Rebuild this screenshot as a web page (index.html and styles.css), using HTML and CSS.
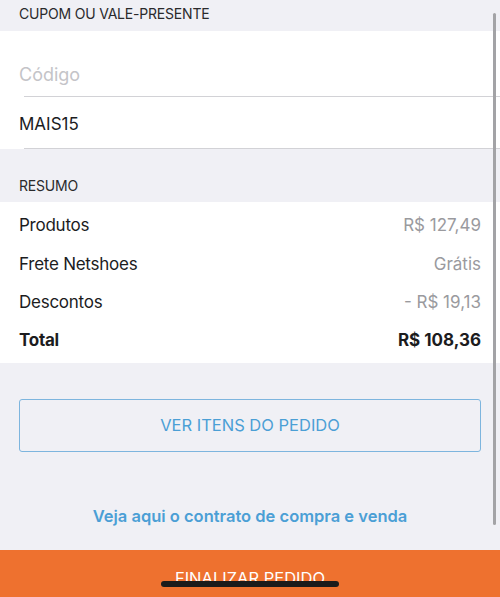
FILE: index.html
```html
<!DOCTYPE html>
<html lang="pt-BR">
<head>
    <meta charset="UTF-8">
    <meta name="viewport" content="width=device-width, initial-scale=1.0">
    <title>Carrinho - Resumo</title>
    <link rel="stylesheet" href="styles.css">
</head>
<body>
    <div class="screen">
        <div class="section-title first">Cupom ou vale-presente</div>
        <div class="group">
            <div class="field field-code">
                <input type="text" placeholder="Código">
            </div>
            <div class="sep"></div>
            <div class="field field-value">MAIS15</div>
            <div class="sep"></div>
        </div>

        <div class="section-title">Resumo</div>
        <div class="group summary">
            <div class="row"><span class="label">Produtos</span><span class="value">R$ 127,49</span></div>
            <div class="row"><span class="label">Frete Netshoes</span><span class="value">Grátis</span></div>
            <div class="row"><span class="label">Descontos</span><span class="value">- R$ 19,13</span></div>
            <div class="row total"><span class="label">Total</span><span>R$ 108,36</span></div>
        </div>

        <button class="outline-btn" type="button">VER ITENS DO PEDIDO</button>

        <a class="contract-link" href="#">Veja aqui o contrato de compra e venda</a>

        <div class="checkout">FINALIZAR PEDIDO</div>

        <div class="scrollbar"></div>
        <div class="home-indicator"></div>
    </div>
</body>
</html>
```

FILE: styles.css
```css
* {
    margin: 0;
    padding: 0;
    box-sizing: border-box;
}

body {
    background: #f0f0f5;
    font-family: Inter, "Noto Sans", sans-serif;
    color: #1c1c1e;
}

.screen {
    position: relative;
    width: 500px;
    height: 597px;
    overflow: hidden;
    display: flex;
    flex-direction: column;
}

.section-title {
    padding: 28px 19px 7px;
    font-size: 14px;
    line-height: 18px;
    letter-spacing: -0.2px;
    text-transform: uppercase;
    color: #2a2a2c;
}

.section-title.first {
    padding-top: 5px;
    padding-bottom: 8px;
}

.group {
    background: #fff;
}

.field {
    padding: 0 19px;
    height: 28px;
    line-height: 28px;
    font-size: 17px;
}

.field-code {
    margin-top: 30px;
    margin-bottom: 7px;
}

.field-code input {
    width: 100%;
    border: none;
    outline: none;
    background: transparent;
    font-family: inherit;
    font-size: 18px;
    line-height: 28px;
    color: #1c1c1e;
}

.field-code input::placeholder {
    color: #c4c4c8;
}

.field-value {
    margin-top: 13px;
    margin-bottom: 10px;
}

.sep {
    margin-left: 24px;
    height: 1px;
    background: #d2d2d6;
}

.summary {
    padding: 4px 19px 3px;
}

.row {
    display: flex;
    justify-content: space-between;
    align-items: center;
    height: 38.4px;
    font-size: 17px;
}

.row .label {
    letter-spacing: -0.25px;
}

.row .value {
    color: #9a9a9e;
}

.row.total {
    font-weight: 700;
}

.outline-btn {
    margin: 36px 19px 0;
    height: 53px;
    border: 1.5px solid #7db5de;
    border-radius: 3px;
    background: transparent;
    color: #4b9fd5;
    font-family: inherit;
    font-size: 16.5px;
    cursor: pointer;
}

.contract-link {
    margin-top: 52px;
    align-self: center;
    line-height: 24px;
    font-size: 16.5px;
    font-weight: 600;
    color: #4b9fd5;
    text-decoration: none;
}

.checkout {
    margin-top: auto;
    height: 47px;
    padding-top: 18px;
    line-height: 20px;
    background: #ee712f;
    color: #fff;
    text-align: center;
    font-size: 16.5px;
}

/* overlays */
.scrollbar {
    position: absolute;
    top: 13px;
    left: 493px;
    width: 3px;
    height: 512px;
    border-radius: 2px;
    background: #a3a3a6;
}

.home-indicator {
    position: absolute;
    left: 161px;
    top: 581px;
    width: 178px;
    height: 6px;
    border-radius: 3px;
    background: #1b1b1b;
}
```
